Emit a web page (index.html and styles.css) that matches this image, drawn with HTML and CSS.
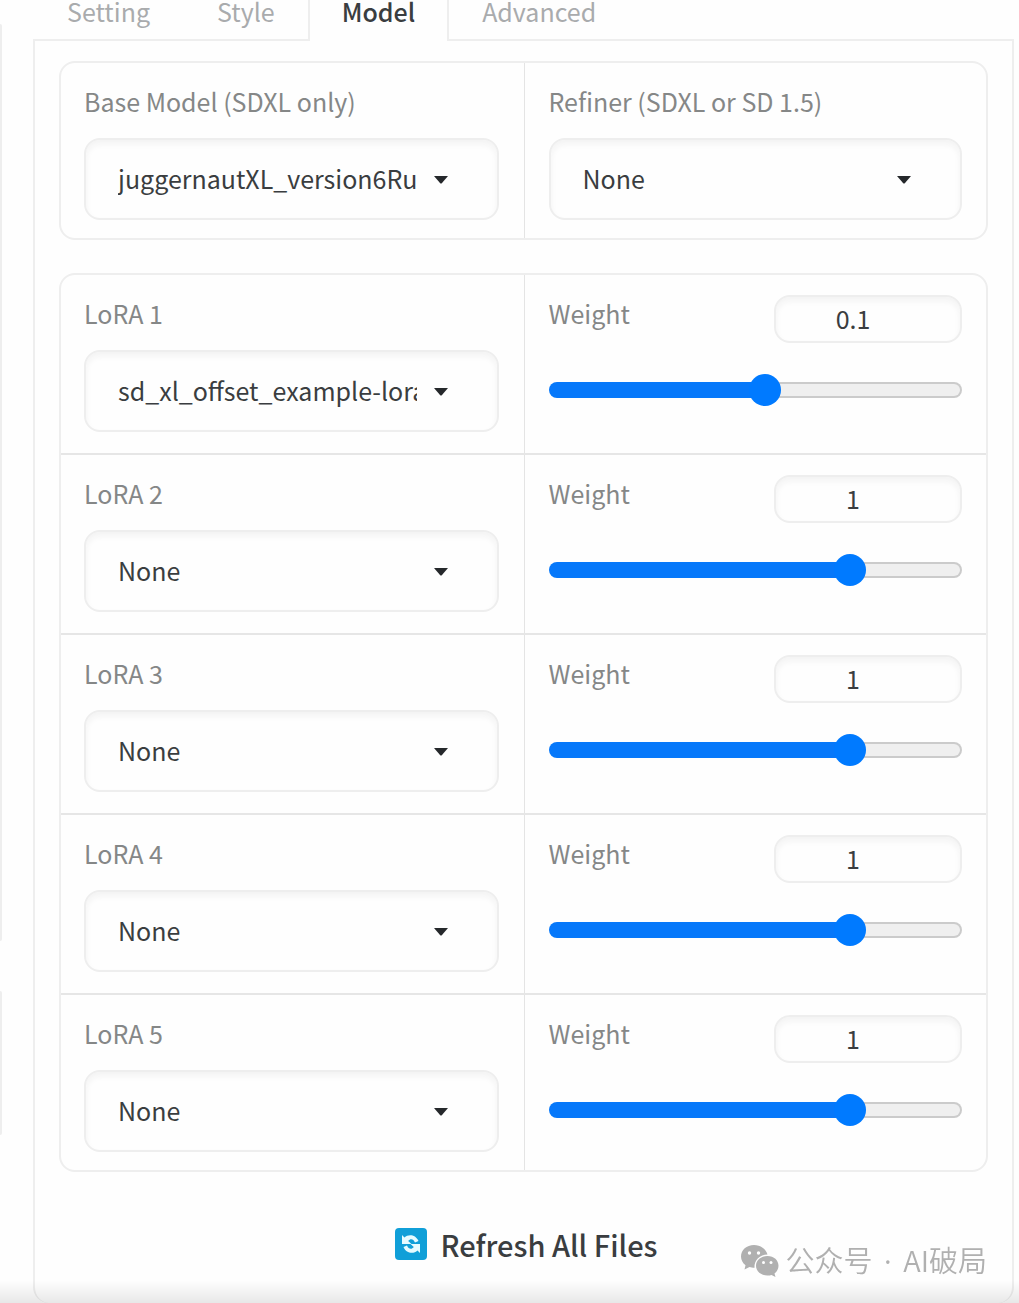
FILE: index.html
```html
<!DOCTYPE html>
<html lang="en">
<head>
<meta charset="utf-8">
<meta name="viewport" content="width=device-width, initial-scale=1">
<title>Model</title>
<link rel="stylesheet" href="styles.css">
</head>
<body>
<svg width="0" height="0" class="sprite" aria-hidden="true">
  <symbol id="caret" viewBox="0 0 14 8"><path d="M0 0h14L8 7q-1 1-2 0z"/></symbol>
</svg>
<div class="page">
  <div class="side" aria-hidden="true">
    <div class="side-card side-card-tall"></div>
    <div class="side-card side-card-short"></div>
    <div class="side-rest"></div>
  </div>
  <main class="main">
    <div class="tabs" role="tablist">
      <button class="tab" role="tab" type="button">Setting</button>
      <button class="tab" role="tab" type="button">Style</button>
      <button class="tab tab-active" role="tab" type="button" aria-selected="true">Model</button>
      <button class="tab" role="tab" type="button">Advanced</button>
    </div>
    <section class="panel">
      <div class="card">
        <div class="row">
          <div class="cell">
            <label class="label" for="base">Base Model (SDXL only)</label>
            <div class="select"><select id="base"><option>juggernautXL_version6Rundiffusion.safetensors</option></select><svg class="caret"><use href="#caret"/></svg></div>
          </div>
          <div class="cell">
            <label class="label" for="refiner">Refiner (SDXL or SD 1.5)</label>
            <div class="select"><select id="refiner"><option>None</option></select><svg class="caret"><use href="#caret"/></svg></div>
          </div>
        </div>
      </div>

      <div class="card">
        <div class="row">
          <div class="cell">
            <label class="label" for="lora1">LoRA 1</label>
            <div class="select"><select id="lora1"><option>sd_xl_offset_example-lora_1.0.safetensors</option></select><svg class="caret"><use href="#caret"/></svg></div>
          </div>
          <div class="cell">
            <div class="weight-head"><label class="label" for="weight1">Weight</label><input class="number" id="weight1" type="text" inputmode="decimal" value="0.1"></div>
            <input class="slider" type="range" min="-2" max="2" step="0.1" value="0.1" aria-label="LoRA 1 weight" style="--fill: 0.525">
          </div>
        </div>
        <div class="row">
          <div class="cell">
            <label class="label" for="lora2">LoRA 2</label>
            <div class="select"><select id="lora2"><option>None</option></select><svg class="caret"><use href="#caret"/></svg></div>
          </div>
          <div class="cell">
            <div class="weight-head"><label class="label" for="weight2">Weight</label><input class="number" id="weight2" type="text" inputmode="decimal" value="1"></div>
            <input class="slider" type="range" min="-2" max="2" step="0.1" value="1" aria-label="LoRA 2 weight" style="--fill: 0.75">
          </div>
        </div>
        <div class="row">
          <div class="cell">
            <label class="label" for="lora3">LoRA 3</label>
            <div class="select"><select id="lora3"><option>None</option></select><svg class="caret"><use href="#caret"/></svg></div>
          </div>
          <div class="cell">
            <div class="weight-head"><label class="label" for="weight3">Weight</label><input class="number" id="weight3" type="text" inputmode="decimal" value="1"></div>
            <input class="slider" type="range" min="-2" max="2" step="0.1" value="1" aria-label="LoRA 3 weight" style="--fill: 0.75">
          </div>
        </div>
        <div class="row">
          <div class="cell">
            <label class="label" for="lora4">LoRA 4</label>
            <div class="select"><select id="lora4"><option>None</option></select><svg class="caret"><use href="#caret"/></svg></div>
          </div>
          <div class="cell">
            <div class="weight-head"><label class="label" for="weight4">Weight</label><input class="number" id="weight4" type="text" inputmode="decimal" value="1"></div>
            <input class="slider" type="range" min="-2" max="2" step="0.1" value="1" aria-label="LoRA 4 weight" style="--fill: 0.75">
          </div>
        </div>
        <div class="row">
          <div class="cell">
            <label class="label" for="lora5">LoRA 5</label>
            <div class="select"><select id="lora5"><option>None</option></select><svg class="caret"><use href="#caret"/></svg></div>
          </div>
          <div class="cell">
            <div class="weight-head"><label class="label" for="weight5">Weight</label><input class="number" id="weight5" type="text" inputmode="decimal" value="1"></div>
            <input class="slider" type="range" min="-2" max="2" step="0.1" value="1" aria-label="LoRA 5 weight" style="--fill: 0.75">
          </div>
        </div>
      </div>

      <button class="refresh" type="button">
        <svg class="refresh-icon" viewBox="0 0 32 32" aria-hidden="true">
          <rect width="32" height="32" rx="4" fill="#109fd8"/>
          <g fill="#e6fbff">
            <path d="M7 7l2.500 2.500C13 6 20.500 6 23.500 13l-3.500 1.500C18.500 11 15.500 10 13.200 13l3.300 3H7z"/>
            <path d="M25 25l-2.500-2.500C19 26 11.500 26 8.500 19l3.500-1.500c1.500 3.500 4.500 4.500 6.800 1.500l-3.300-3H25z"/>
          </g>
        </svg>
        Refresh All Files
      </button>
    </section>
  </main>
</div>
<div class="bottom-shade"></div>
<div class="account" lang="zh">
  <svg class="account-icon" viewBox="0 0 39 33" aria-hidden="true">
    <path fill="#b0b0b0" d="M14 1C6.500 1 1 6 1 12.500c0 3.500 1.700 6.500 4.500 8.700L4.500 25.500l5-2.500c1.500.4 3 .7 5 .7C14 16 20 10.500 27.500 10.500 26 5 20.500 1 14 1z"/>
    <path fill="#b0b0b0" d="M27.500 12C21 12 16 16.300 16 21.700s5 9.800 11.500 9.800c1.500 0 2.800-.2 4-.6l4 2-1-3.500c2.500-1.800 4-4.600 4-7.700C38.500 16.300 34 12 27.500 12z"/>
    <g fill="#fefefe"><circle cx="9.500" cy="9" r="1.700"/><circle cx="18.500" cy="9" r="1.700"/><circle cx="23.500" cy="18.500" r="1.500"/><circle cx="31" cy="18.500" r="1.500"/></g>
  </svg>
  <span>公众号<span class="dot"> · </span>AI破局</span>
</div>
</body>
</html>
```
FILE: styles.css
```css
* { box-sizing: border-box; }

:root {
  --line: #eeeeee;
  --text: #3a3d40;
  --muted: #858787;
  --blue: #0678fa;
}

body {
  margin: 0;
  background: #fefefe;
  color: var(--text);
  font-family: "Noto Sans CJK SC", "Noto Sans", sans-serif;
  font-size: 25px;
}

button, select, input { font: inherit; color: inherit; }

.sprite { position: absolute; }

.page {
  display: flex;
  gap: 31px;
  min-height: 100vh;
  padding-right: 5px;
}

/* Edge of the neighbouring column */
.side {
  display: flex;
  flex-direction: column;
  flex: 0 0 2px;
  padding-top: 24px;
}
.side-card {
  border-right: 2px solid var(--line);
  border-radius: 0 2px 2px 0;
}
.side-card-tall { flex: 917; margin-bottom: 50px; }
.side-card-short { flex: 144; }
.side-rest { flex: 168; }

.main {
  display: flex;
  flex-direction: column;
  flex: 1;
  min-width: 0;
}

.tabs {
  position: relative;
  z-index: 1;
  display: flex;
  margin-bottom: -2px;
}
.tab {
  padding: 0 32px 18px;
  border: 0 solid transparent;
  border-width: 0 2px;
  background: none;
  color: #a9abad;
  line-height: 23px;
}
.tab + .tab { margin-left: -1px; }
.tab-active {
  border-color: var(--line);
  background: #fefefe;
  color: var(--text);
  font-weight: 500;
}

.panel {
  flex: 1;
  padding: 20px 24px 24px;
  border: 2px solid var(--line);
  border-bottom: 0;
  border-radius: 0 0 16px 16px;
}

.card {
  border: 2px solid var(--line);
  border-radius: 16px;
}
.card + .card { margin-top: 33px; }

.row { display: grid; grid-template-columns: 1fr 1fr; }
.row + .row { border-top: 2px solid #e6e6e6; }

.cell {
  min-width: 0;
  padding: 20px 25px 21px 23px;
}
.cell + .cell {
  padding-right: 24px;
  padding-left: 24px;
  border-left: 1px solid #e4e4e4;
}
.row:last-child .cell { padding-bottom: 18px; }

.label {
  display: block;
  color: var(--muted);
  line-height: 36px;
}

.select { display: grid; align-items: center; margin-top: 19px; }
.select select {
  grid-area: 1 / 1;
  width: 100%;
  height: 82px;
  padding: 0 80px 2px 32px;
  border: 2px solid var(--line);
  border-radius: 16px;
  background: none;
  box-shadow: inset 0 4px 6px #f3f3f3;
  appearance: none;
}
.caret {
  grid-area: 1 / 1;
  justify-self: end;
  width: 14px;
  height: 8px;
  margin: 2px 51px 0 0;
  fill: #25282b;
  pointer-events: none;
}

.weight-head {
  display: flex;
  align-items: flex-start;
  justify-content: space-between;
}
.number {
  width: 188px;
  height: 48px;
  padding: 0 30px 2px 0;
  border: 2px solid var(--line);
  border-radius: 16px;
  background: none;
  box-shadow: inset 0 4px 6px #f3f3f3;
  text-align: center;
}

.slider {
  --stop: calc(16px + (100% - 32px) * var(--fill));
  display: block;
  width: 100%;
  height: 32px;
  margin: 31px 0 0;
  background: none;
  appearance: none;
}
.slider::-webkit-slider-runnable-track {
  height: 16px;
  border: 2px solid transparent;
  border-radius: 8px;
  background:
    linear-gradient(to right, var(--blue) var(--stop), transparent var(--stop)) border-box,
    linear-gradient(#efefef, #efefef) padding-box,
    linear-gradient(#cbcbcb, #cbcbcb) border-box;
}
.slider::-webkit-slider-thumb {
  width: 32px;
  height: 32px;
  margin-top: -10px;
  border-radius: 50%;
  background: #007aff;
  appearance: none;
}

.refresh {
  display: flex;
  align-items: center;
  justify-content: center;
  gap: 13px;
  width: 100%;
  margin-top: 47px;
  padding: 0 0 0 6px;
  border: 0;
  background: none;
  font-size: 29px;
  font-weight: 500;
  line-height: 50px;
}
.refresh-icon { width: 32px; height: 32px; }

.bottom-shade {
  position: fixed;
  inset: auto 0 0;
  height: 22px;
  background: linear-gradient(rgba(0, 0, 0, 0), rgba(0, 0, 0, 0.09));
  pointer-events: none;
}

/* Account mark over the page corner */
.account {
  position: fixed;
  right: 32px;
  bottom: 20px;
  display: flex;
  align-items: center;
  gap: 7px;
  color: #b0b0b0;
  font-size: 29px;
  font-weight: 350;
  line-height: 44px;
}
.account-icon { width: 39px; height: 33px; }
.dot {
  padding: 0 4px;
  font-family: "Open Sans", "Noto Sans", sans-serif;
  font-weight: 400;
  white-space: pre;
}
```
